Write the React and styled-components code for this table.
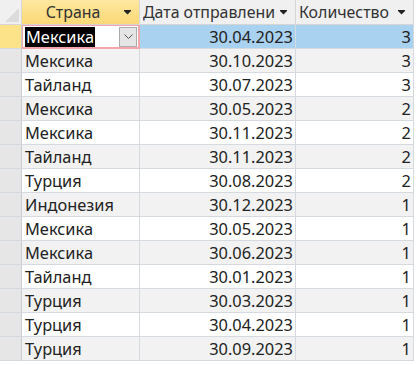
import styled, { createGlobalStyle } from 'styled-components';

const GlobalStyle = createGlobalStyle`
	html, body {
		margin: 0;
		padding: 0;
		background: #ffffff;
	}
	body {
		font-family: 'Noto Sans', 'Open Sans', sans-serif;
	}
`;

const rows = [
	['Мексика', '30.04.2023', 3],
	['Мексика', '30.10.2023', 3],
	['Тайланд', '30.07.2023', 3],
	['Мексика', '30.05.2023', 2],
	['Мексика', '30.11.2023', 2],
	['Тайланд', '30.11.2023', 2],
	['Турция', '30.08.2023', 2],
	['Индонезия', '30.12.2023', 1],
	['Мексика', '30.05.2023', 1],
	['Мексика', '30.06.2023', 1],
	['Тайланд', '30.01.2023', 1],
	['Турция', '30.03.2023', 1],
	['Турция', '30.04.2023', 1],
	['Турция', '30.09.2023', 1],
];

const Sheet = styled.div`
	display: grid;
	grid-template-columns: 22px 118px 156px 118px;
	grid-auto-rows: 24px;
	grid-template-rows: 25px;
	width: 414px;
	font-size: 16.4px;
	color: #222;
`;

const Corner = styled.div`
	position: relative;
	background: #f0f0f0;
	border-right: 1px solid #d5d5d5;
	border-bottom: 1px solid #d5d5d5;

	& svg {
		position: absolute;
		right: 2px;
		bottom: 2px;
	}
`;

const HeaderCell = styled.div`
	display: flex;
	align-items: center;
	gap: 3px;
	padding: 0 8px 0 3px;
	font-size: 15.9px;
	background: ${(p) => (p.$active ? 'linear-gradient(#fde7a0, #fcd977)' : '#f0f0f0')};
	border-right: 1px solid #d5d5d5;
	border-bottom: 1px solid #d5d5d5;
	color: #333;
	white-space: nowrap;
	overflow: hidden;

	& .label {
		flex: 1;
		overflow: hidden;
		text-align: ${(p) => (p.$center ? 'center' : 'left')};
	}

	& svg {
		flex-shrink: 0;
	}
`;

const Selector = styled.div`
	background: ${(p) => (p.$current ? '#fce38a' : '#e6e6e6')};
	border-right: 1px solid #c9ccd2;
	border-bottom: 1px solid #d5d9e0;
`;

const Cell = styled.div`
	display: flex;
	align-items: center;
	justify-content: ${(p) => (p.$right ? 'flex-end' : 'flex-start')};
	padding: 0 2px 0 3px;
	background: ${(p) => (p.$selected ? '#a9d1f0' : p.$odd ? '#f2f2f2' : '#ffffff')};
	border-right: 1px solid #d5d9e0;
	border-bottom: 1px solid #d5d9e0;
	white-space: nowrap;
	overflow: hidden;
`;

const ActiveCell = styled.div`
	display: flex;
	align-items: center;
	justify-content: space-between;
	padding: 0 1px 0 2px;
	background: #ffffff;
	border: 1px solid #f3a6a9;
	border-width: 1px 2px 2px 1px;
`;

const Highlight = styled.span`
	background: #000;
	color: #fff;
	padding: 0 1px;
	line-height: 20px;
`;

const DropButton = styled.div`
	width: 18px;
	height: 20px;
	display: flex;
	align-items: center;
	justify-content: center;
	background: #e5e5e5;
	border: 1px solid #acacac;
	box-sizing: border-box;
`;

const FilterArrow = () => (
	<svg width="7" height="5" viewBox="0 0 7 5">
		<rect x="0" y="0" width="7" height="1" fill="#222" />
		<path d="M0 1 H7 L3.5 4.5 Z" fill="#222" />
	</svg>
);

const Header = ({ children, active, center }) => (
	<HeaderCell $active={active} $center={center}>
		<span className="label">{children}</span>
		<FilterArrow />
	</HeaderCell>
);

export default function App() {
	return (
		<>
			<GlobalStyle />
			<Sheet>
				<Corner>
					<svg width="14" height="14" viewBox="0 0 14 14">
						<path d="M14 0 L14 14 L0 14 Z" fill="#dcdcdc" />
					</svg>
				</Corner>
				<Header active center>
					Страна
				</Header>
				<Header>Дата отправлени</Header>
				<Header>Количество</Header>
				{rows.map(([country, date, count], i) => {
					const first = i === 0;
					const odd = i % 2 === 1;
					return [
						<Selector key={`s${i}`} $current={first} />,
						first ? (
							<ActiveCell key={`c${i}`}>
								<Highlight>{country}</Highlight>
								<DropButton>
									<svg width="9" height="5" viewBox="0 0 9 5">
										<path d="M0.5 0.5 L4.5 4.5 L8.5 0.5" fill="none" stroke="#555" strokeWidth="1" />
									</svg>
								</DropButton>
							</ActiveCell>
						) : (
							<Cell key={`c${i}`} $odd={odd}>
								{country}
							</Cell>
						),
						<Cell key={`d${i}`} $right $odd={odd} $selected={first}>
							{date}
						</Cell>,
						<Cell key={`n${i}`} $right $odd={odd} $selected={first}>
							{count}
						</Cell>,
					];
				})}
			</Sheet>
		</>
	);
}
